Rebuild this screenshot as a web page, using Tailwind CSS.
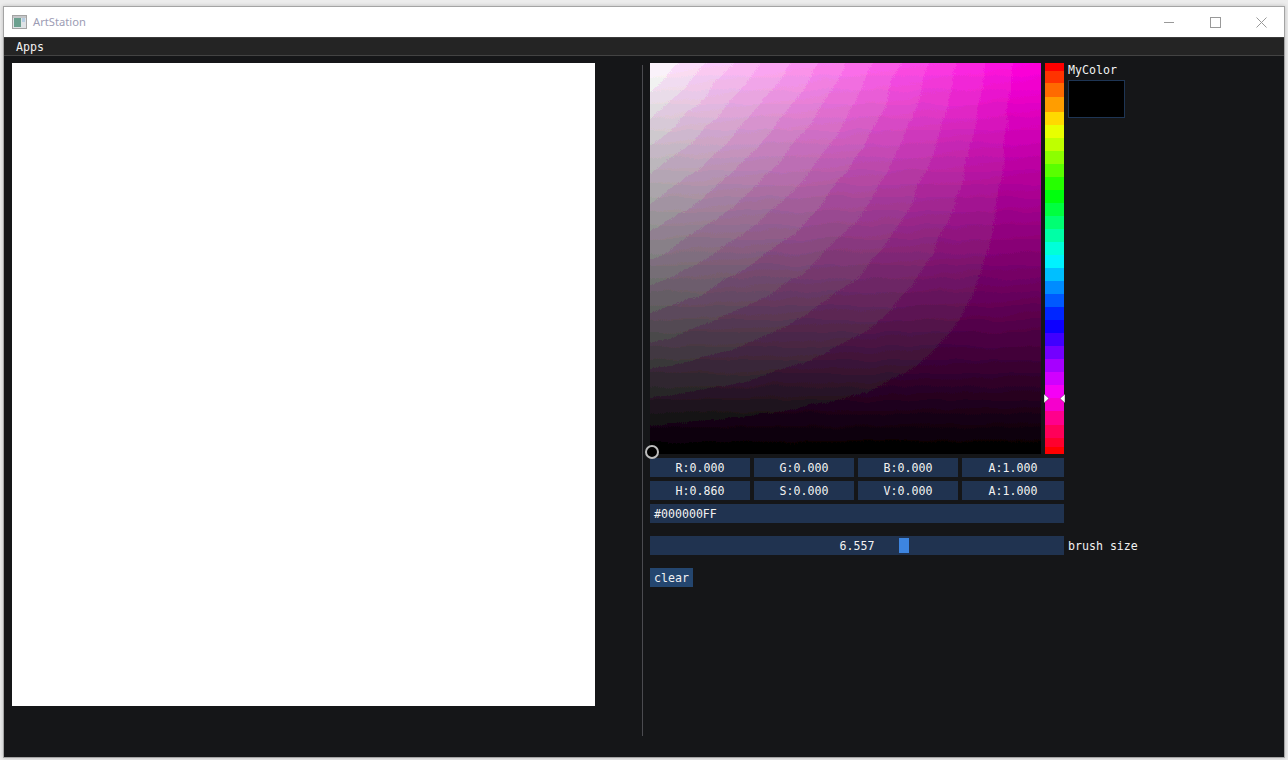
<!DOCTYPE html>
<html>
<head>
<meta charset="utf-8">
<script src="https://cdn.jsdelivr.net/npm/@tailwindcss/browser@4"></script>
</head>
<body class="w-[1288px] h-[760px] overflow-hidden bg-[#ececec] font-['DejaVu_Sans_Mono',monospace] text-[11.6px] leading-[13px] text-[#f2f2f2]">
<div class="ml-[3px] mt-[6px] w-[1282px] h-[752px] border border-[#a4a4a4] flex flex-col shadow-[0_0_4px_rgba(0,0,0,0.2)]">
  <!-- title bar -->
  <div class="h-[30px] bg-white flex items-center justify-between shrink-0">
    <div class="flex items-center pl-[8px] gap-[6px]">
      <svg width="15" height="14" viewBox="0 0 15 14">
        <rect x="0.5" y="0.5" width="14" height="13" fill="#dfe3e6" stroke="#a3a3a3"/>
        <rect x="1" y="1" width="13" height="2" fill="#c4c6c8"/>
        <rect x="2" y="3" width="7" height="9" fill="#6ba08f"/>
        <rect x="10" y="3" width="3" height="4" fill="#b4cde2"/>
      </svg>
      <span class="font-['Noto_Sans',sans-serif] text-[11.2px] leading-[16px] text-[#9c9cb4]">ArtStation</span>
    </div>
    <div class="flex items-center text-[#999999]">
      <div class="w-[46px] h-[30px] flex items-center justify-center"><svg width="10" height="10" viewBox="0 0 10 10"><path d="M0 5.5H10" stroke="currentColor" fill="none"/></svg></div>
      <div class="w-[46px] h-[30px] flex items-center justify-center"><svg width="11" height="11" viewBox="0 0 11 11"><rect x="0.5" y="0.5" width="10" height="10" stroke="currentColor" fill="none"/></svg></div>
      <div class="w-[46px] h-[30px] flex items-center justify-center"><svg width="11" height="11" viewBox="0 0 11 11"><path d="M0.5 0.5L10.5 10.5M10.5 0.5L0.5 10.5" stroke="currentColor" fill="none"/></svg></div>
    </div>
  </div>
  <!-- menu bar -->
  <div class="h-[19px] shrink-0 bg-[#242424] border-t border-[#3a3a3a] border-b border-b-[#434343] pl-[12px] pt-[2px] flex items-center">Apps</div>
  <!-- content -->
  <div class="flex-1 bg-[#151618] flex items-start pl-[8px] pt-[7px]">
    <div class="w-[583px] h-[643px] bg-white shrink-0"></div>
    <div class="ml-[47px] mt-[2px] w-px h-[671px] bg-[#4b4b50] shrink-0"></div>
    <div class="ml-[7px] flex flex-col relative">
      <div class="flex items-start">
        <div class="relative w-[391px] h-[391px]">
          <svg width="391" height="391" viewBox="0 0 391 391" class="block">
            <defs>
              <linearGradient id="sat" gradientUnits="userSpaceOnUse" x1="0" y1="0" x2="391" y2="0">
                <stop offset="0" stop-color="#ffffff"/>
                <stop offset="1" stop-color="#ff00dc"/>
              </linearGradient>
              <linearGradient id="val" gradientUnits="userSpaceOnUse" x1="0" y1="0" x2="0" y2="391">
                <stop offset="0" stop-color="#000000" stop-opacity="0"/>
                <stop offset="1" stop-color="#000000" stop-opacity="1"/>
              </linearGradient>
              <filter id="quant" filterUnits="userSpaceOnUse" x="-30" y="-30" width="451" height="451" color-interpolation-filters="sRGB">
                <feComponentTransfer in="SourceGraphic" result="bands">
                  <feFuncR type="discrete" tableValues="0 .052 .086 .121 .155 .19 .224 .259 .293 .328 .362 .397 .431 .466 .5 .534 .569 .603 .638 .672 .707 .741 .776 .81 .845 .879 .914 .948 .983"/>
                  <feFuncG type="discrete" tableValues="0 .08 .15 .22 .29 .365 .435 .505 .58 .65 .72 .79 .865 .95"/>
                  <feFuncB type="discrete" tableValues="0 .052 .086 .121 .155 .19 .224 .259 .293 .328 .362 .397 .431 .466 .5 .534 .569 .603 .638 .672 .707 .741 .776 .81 .845 .879 .914 .948 .983"/>
                </feComponentTransfer>
                <feTurbulence type="fractalNoise" baseFrequency="0.03" numOctaves="2" seed="7" result="noise"/>
                <feDisplacementMap in="bands" in2="noise" scale="8" xChannelSelector="R" yChannelSelector="G"/>
              </filter>
            </defs>
            <g filter="url(#quant)">
              <rect x="-30" y="-30" width="451" height="451" fill="url(#sat)"/>
              <rect x="-30" y="-30" width="451" height="451" fill="url(#val)"/>
            </g>
          </svg>
          <div class="absolute left-[-5px] top-[382px] w-[14px] h-[14px] rounded-full border-2 border-[#bdbdbd] bg-black"></div>
        </div>
        <div class="relative ml-[4px] w-[19px] h-[391px] flex flex-col">
          <div class="h-[8px] bg-[#ff0000]"></div>
          <div class="h-[12px] bg-[#ff3300]"></div>
          <div class="h-[14px] bg-[#ff6a00]"></div>
          <div class="h-[15px] bg-[#ff9d00]"></div>
          <div class="h-[13px] bg-[#ffd900]"></div>
          <div class="h-[13px] bg-[#e8ff00]"></div>
          <div class="h-[13px] bg-[#bfff00]"></div>
          <div class="h-[13px] bg-[#8cff00]"></div>
          <div class="h-[13px] bg-[#59ff00]"></div>
          <div class="h-[13px] bg-[#26ff00]"></div>
          <div class="h-[13px] bg-[#00ff0d]"></div>
          <div class="h-[13px] bg-[#00ff40]"></div>
          <div class="h-[13px] bg-[#00ff73]"></div>
          <div class="h-[13px] bg-[#00ffa6]"></div>
          <div class="h-[13px] bg-[#00ffd9]"></div>
          <div class="h-[13px] bg-[#00f2ff]"></div>
          <div class="h-[13px] bg-[#00bfff]"></div>
          <div class="h-[13px] bg-[#008cff]"></div>
          <div class="h-[13px] bg-[#0059ff]"></div>
          <div class="h-[13px] bg-[#0026ff]"></div>
          <div class="h-[13px] bg-[#0d00ff]"></div>
          <div class="h-[13px] bg-[#4000ff]"></div>
          <div class="h-[13px] bg-[#7300ff]"></div>
          <div class="h-[13px] bg-[#a600ff]"></div>
          <div class="h-[13px] bg-[#d000ff]"></div>
          <div class="h-[13px] bg-[#f500f5]"></div>
          <div class="h-[13px] bg-[#f500cc]"></div>
          <div class="h-[14px] bg-[#ff008c]"></div>
          <div class="h-[13px] bg-[#ff0059]"></div>
          <div class="h-[9px] bg-[#ff002e]"></div>
          <div class="h-[7px] bg-[#ff0000]"></div>
          <svg width="6" height="9" viewBox="0 0 6 9" class="absolute left-[-1px] top-[331px]"><path d="M0 0L5 4.5L0 9Z" fill="#ffffff" stroke="#222" stroke-width="0.4"/></svg>
          <svg width="6" height="9" viewBox="0 0 6 9" class="absolute right-[-1px] top-[331px]"><path d="M6 0L1 4.5L6 9Z" fill="#ffffff" stroke="#222" stroke-width="0.4"/></svg>
        </div>
        <div class="ml-[4px] flex flex-col">
          <div class="h-[17px] pt-[1px]">MyColor</div>
          <div class="w-[57px] h-[38px] bg-black border border-[#1e3554]"></div>
        </div>
      </div>
      <div class="mt-[4px] flex gap-[4px]">
        <div class="w-[100px] h-[19px] pt-[2px] bg-[#203350] flex items-center justify-center">R:0.000</div>
        <div class="w-[100px] h-[19px] pt-[2px] bg-[#203350] flex items-center justify-center">G:0.000</div>
        <div class="w-[100px] h-[19px] pt-[2px] bg-[#203350] flex items-center justify-center">B:0.000</div>
        <div class="w-[102px] h-[19px] pt-[2px] bg-[#203350] flex items-center justify-center">A:1.000</div>
      </div>
      <div class="mt-[4px] flex gap-[4px]">
        <div class="w-[100px] h-[19px] pt-[2px] bg-[#203350] flex items-center justify-center">H:0.860</div>
        <div class="w-[100px] h-[19px] pt-[2px] bg-[#203350] flex items-center justify-center">S:0.000</div>
        <div class="w-[100px] h-[19px] pt-[2px] bg-[#203350] flex items-center justify-center">V:0.000</div>
        <div class="w-[102px] h-[19px] pt-[2px] bg-[#203350] flex items-center justify-center">A:1.000</div>
      </div>
      <div class="mt-[4px] w-[414px] h-[19px] pt-[1px] bg-[#203350] flex items-center pl-[4px]">#000000FF</div>
      <div class="mt-[13px] flex items-center">
        <div class="relative w-[414px] h-[19px] pt-[2px] bg-[#203350] flex items-center justify-center">
          6.557
          <div class="absolute left-[249px] top-[2px] w-[10px] h-[15px] bg-[#3d85e0]"></div>
        </div>
        <span class="ml-[4px] pt-[2px]">brush size</span>
      </div>
      <div class="mt-[13px] w-[43px] h-[19px] pt-[2px] bg-[#24466f] flex items-center justify-center">clear</div>
    </div>
  </div>
</div>
</body>
</html>
